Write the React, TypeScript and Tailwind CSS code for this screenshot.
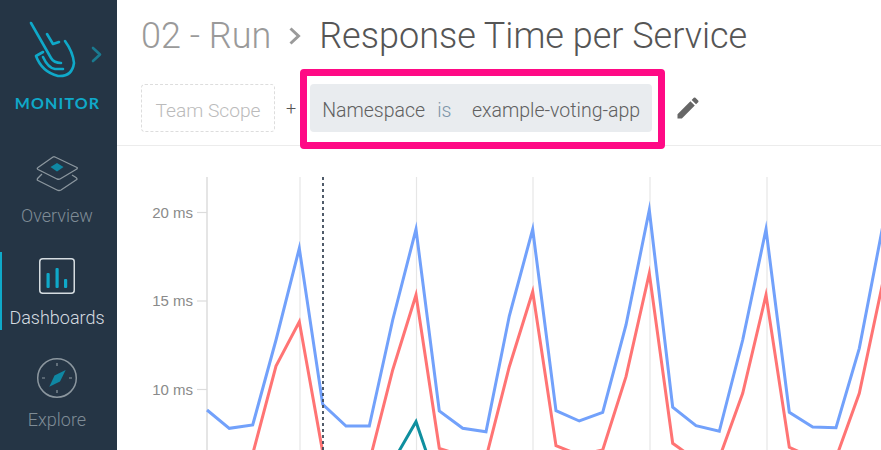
import { MdEdit } from 'react-icons/md';

const BLUE = [[207,410],[229.3,428.3],[252.7,425],[276,340],[299.3,248.3],[322.7,404.3],[346,426],[369.3,426],[392.7,320],[416,229.3],[439.3,411],[462.7,428.3],[486,431.7],[509.3,316],[532.7,229.3],[556,410.7],[579.3,421],[602.7,412.3],[626,325],[649.3,210],[672.7,407.3],[696,425.7],[719.3,431.3],[742.7,340],[766,229.3],[789.3,412.3],[812.7,427],[836,427.7],[859.3,348.3],[882.7,226.7]];
const RED = [[229.3,490],[252.7,454],[276,366],[299.3,321.7],[322.7,452],[346,480],[369.3,462],[392.7,370],[416,295],[439.3,448.3],[462.7,456],[486,458],[509.3,366.7],[532.7,291.7],[556,445.7],[579.3,455],[602.7,450],[626,376.7],[649.3,273.3],[672.7,443.3],[696,460],[719.3,458],[742.7,393.3],[766,295],[789.3,447.3],[812.7,458],[836,458],[859.3,393.3],[882.7,283]];
const TEAL = [[392.7,462],[416,421.7],[439.3,490]];
const GRID = [300, 416.5, 533, 650, 767];
const TICKS = [{ y: 212.5, label: '20 ms' }, { y: 301, label: '15 ms' }, { y: 389.5, label: '10 ms' }];

const pts = (p: number[][]) => p.map(([x, y]) => `${x},${y}`).join(' ');

function Logo() {
  return (
    <svg width="117" height="96" viewBox="0 0 117 96" fill="none" className="shrink-0" strokeLinecap="round" strokeLinejoin="round">
      <g stroke="#0fa9c9" strokeWidth="2.600">
        <path d="M31 23 L51 58 Q54 63 61 63" />
        <path d="M47 34 L53 44 L59 42" />
        <path d="M43 52 L36 56 Q42 72 58 76 Q72 77 74 63 Q73 52 65 41" />
        <path d="M43 57 Q48 68 55 69 L63 69" />
      </g>
      <path d="M93 48 L100 54.500 L93 61" stroke="#1a7a90" strokeWidth="2.600" />
    </svg>
  );
}

function OverviewIcon() {
  return (
    <svg width="44" height="38" viewBox="35 155 44 38" fill="none" stroke="#8c979f" strokeWidth="1.300" strokeLinejoin="round">
      <path d="M55 157 L77 167.500 Q78 168.500 76 169.500 L60 179 Q59 179.500 57 179 L38 169.500 Q36.500 168.500 38 167.500 L53 157 Q54 156.500 55 157 Z" />
      <path d="M42 174 L38 178 Q36.500 180 38 180.500 L57 190 Q59 191 61 190 L76 180 Q78 179 76 177.500 L72 175" />
      <path d="M57 163 L63.500 167 L57 171.500 L50.500 167 Z" fill="#0f87a3" stroke="none" />
    </svg>
  );
}

function DashboardsIcon() {
  return (
    <svg width="36" height="36" viewBox="39 258 36 36" fill="none">
      <rect x="39.750" y="258.750" width="34.500" height="34.500" rx="3" stroke="#d5dce0" strokeWidth="1.500" />
      <rect x="46.500" y="273" width="3.200" height="15" rx="1" fill="#0fa9c9" />
      <rect x="55.500" y="268" width="3.200" height="20" rx="1" fill="#0fa9c9" />
      <rect x="64" y="279" width="3.200" height="9" rx="1" fill="#0fa9c9" />
    </svg>
  );
}

function ExploreIcon() {
  return (
    <svg width="42" height="42" viewBox="36 357 42 42" fill="none">
      <circle cx="57" cy="378" r="19.300" stroke="#8c979f" strokeWidth="1.500" />
      <path d="M57 363 V366 M57 390 V393 M42 378 H45 M69 378 H72" stroke="#8c979f" strokeWidth="1.200" />
      <path d="M65.700 370 L60 381.500 L49.300 386.700 L54.500 375.500 Z" fill="#0f87a3" />
    </svg>
  );
}

function NavItem({ icon, label, active, className, labelClass }: { icon: React.ReactNode; label: string; active?: boolean; className?: string; labelClass?: string }) {
  return (
    <div className={`flex flex-col items-center border-l-2 pr-[5px] ${active ? 'border-[#0fa9c9] text-[#d5dce0]' : 'border-transparent text-[#7f8c96]'} ${className ?? ''}`}>
      {icon}
      <span className={`text-[18px] leading-[21px] font-light ${labelClass ?? ''}`}>{label}</span>
    </div>
  );
}

export default function App() {
  return (
    <div className="flex h-[450px] w-[881px] overflow-hidden bg-white font-['Roboto',sans-serif]">
      <aside className="w-[117px] shrink-0 bg-[#253545] flex flex-col">
        <Logo />
        <div className="text-[#0fa9c9] text-[16px] font-bold font-['Lato',sans-serif] text-center tracking-[1.100px] leading-[14px] pr-[2px]">MONITOR</div>
        <NavItem className="mt-[45px]" labelClass="mt-[12px]" icon={<OverviewIcon />} label="Overview" />
        <NavItem className="mt-[26px] h-[78px] pt-[6px]" labelClass="mt-[13px]" icon={<DashboardsIcon />} label="Dashboards" active />
        <NavItem className="mt-[27px]" labelClass="mt-[10px]" icon={<ExploreIcon />} label="Explore" />
      </aside>

      <main className="flex-1 flex flex-col min-w-0">
        <header className="h-[146px] shrink-0 border-b border-[#ececec] pl-6">
          <div className="flex items-center h-[84px] pb-[12px] text-[36px] font-light">
            <span className="text-[#9a9a9a]">02 - Run</span>
            <svg width="14" height="18" viewBox="0 0 14 18" fill="none" className="mx-[17px]">
              <path d="M2.500 1.500 L10.500 9 L2.500 16.500" stroke="#9a9a9a" strokeWidth="3" />
            </svg>
            <span className="text-[#555]">Response Time per Service</span>
          </div>
          <div className="flex items-center">
            <div className="h-[48px] w-[134px] border border-dashed border-[#ddd] rounded flex items-center justify-center pt-[6px] text-[19.200px] font-light text-[#bbb]">Team Scope</div>
            <span className="ml-[11px] mr-[14px] text-[#555] text-[18px] font-light">+</span>
            <div className="relative h-[48px] w-[342px] bg-[#e9ecef] rounded flex items-center px-[12px] pt-[6px] text-[19.500px] font-light text-[#606060]">
              <span>Namespace</span>
              <span className="text-[#7d95a8] ml-[12px]">is</span>
              <span className="ml-auto">example-voting-app</span>
              <div className="absolute -left-[10px] -right-[13px] -top-[15px] -bottom-[17px] border-[7px] border-[#ff0a85] rounded-[4px]" />
            </div>
            <MdEdit className="ml-[22px] w-[28px] h-[28px] text-[#666]" />
          </div>
        </header>

        <svg className="flex-1 block" viewBox="117 146 764 304" fill="none">
          <line x1="207" y1="177" x2="207" y2="450" stroke="#dcdcdc" strokeWidth="1.500" />
          {GRID.map(x => (
            <line key={x} x1={x} y1="177" x2={x} y2="450" stroke="#e6e6e6" strokeWidth="1.200" />
          ))}
          {TICKS.map(t => (
            <g key={t.y}>
              <line x1="197" y1={t.y} x2="207" y2={t.y} stroke="#dcdcdc" strokeWidth="1.200" />
              <text x="193" y={t.y + 5} textAnchor="end" fill="#8a8a8a" fontSize="15" fontFamily="'Liberation Sans', sans-serif">{t.label}</text>
            </g>
          ))}
          <polyline points={pts(TEAL)} stroke="#0f8f9f" strokeWidth="3" strokeLinejoin="miter" strokeMiterlimit="10" />
          <polyline points={pts(RED)} stroke="#ff7474" strokeWidth="3" strokeLinejoin="miter" strokeMiterlimit="10" />
          <polyline points={pts(BLUE)} stroke="#72a1fb" strokeWidth="3" strokeLinejoin="miter" strokeMiterlimit="10" />
          <line x1="323" y1="177" x2="323" y2="450" stroke="#3d4a5a" strokeWidth="1.800" strokeDasharray="3 3" />
        </svg>
      </main>
    </div>
  );
}
